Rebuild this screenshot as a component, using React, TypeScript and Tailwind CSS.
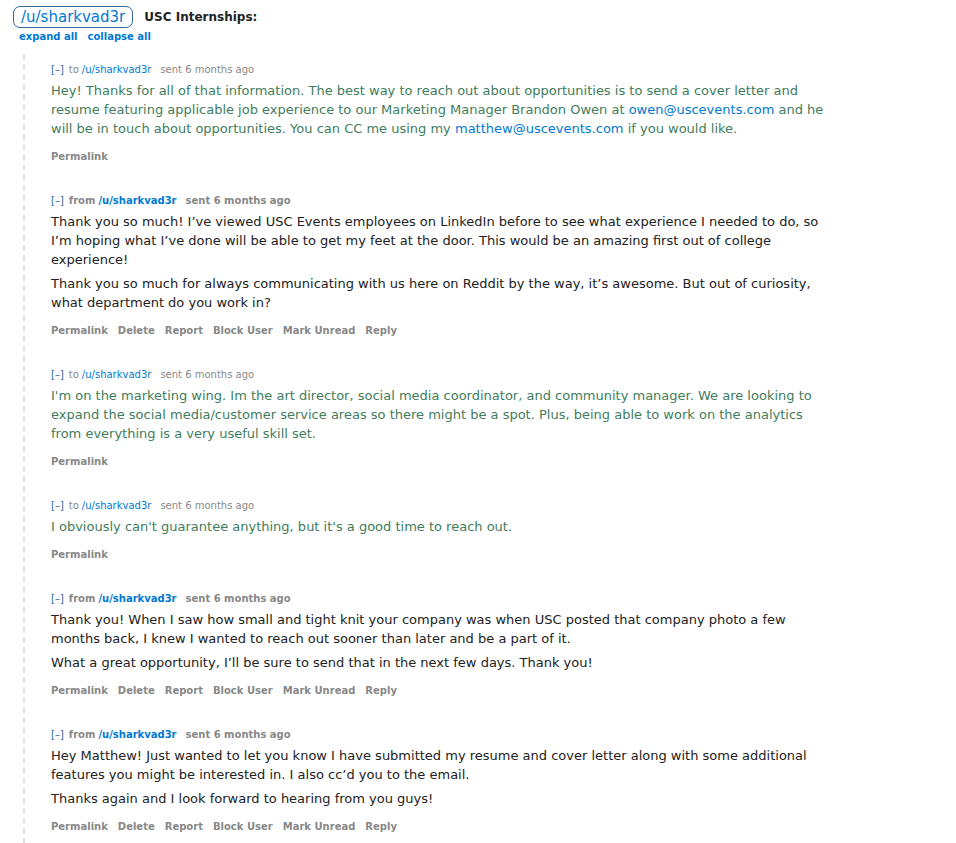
type Message = {
  dir: "to" | "from";
  paragraphs: React.ReactNode[];
};

const LINK = "text-[#0079d3]";

const MESSAGES: Message[] = [
  {
    dir: "to",
    paragraphs: [
      <>
        Hey! Thanks for all of that information. The best way to reach out about opportunities is to send a cover letter and
        resume featuring applicable job experience to our Marketing Manager Brandon Owen at{" "}
        <a className={LINK}>owen@uscevents.com</a> and he will be in touch about opportunities. You can CC me using my{" "}
        <a className={LINK}>matthew@uscevents.com</a> if you would like.
      </>,
    ],
  },
  {
    dir: "from",
    paragraphs: [
      "Thank you so much! I’ve viewed USC Events employees on LinkedIn before to see what experience I needed to do, so I’m hoping what I’ve done will be able to get my feet at the door. This would be an amazing first out of college experience!",
      "Thank you so much for always communicating with us here on Reddit by the way, it’s awesome. But out of curiosity, what department do you work in?",
    ],
  },
  {
    dir: "to",
    paragraphs: [
      "I'm on the marketing wing. Im the art director, social media coordinator, and community manager. We are looking to expand the social media/customer service areas so there might be a spot. Plus, being able to work on the analytics from everything is a very useful skill set.",
    ],
  },
  {
    dir: "to",
    paragraphs: ["I obviously can't guarantee anything, but it's a good time to reach out."],
  },
  {
    dir: "from",
    paragraphs: [
      "Thank you! When I saw how small and tight knit your company was when USC posted that company photo a few months back, I knew I wanted to reach out sooner than later and be a part of it.",
      "What a great opportunity, I’ll be sure to send that in the next few days. Thank you!",
    ],
  },
  {
    dir: "from",
    paragraphs: [
      "Hey Matthew! Just wanted to let you know I have submitted my resume and cover letter along with some additional features you might be interested in. I also cc’d you to the email.",
      "Thanks again and I look forward to hearing from you guys!",
    ],
  },
];

const RECEIVED_ACTIONS = ["Permalink", "Delete", "Report", "Block User", "Mark Unread", "Reply"];

function MessageRow({ msg }: { msg: Message }) {
  const sent = msg.dir === "to";
  const actions = sent ? ["Permalink"] : RECEIVED_ACTIONS;

  return (
    <div className="pb-[30px]">
      <p className={`flex h-[14px] items-center text-[10px] leading-[14px] text-[#888] ${sent ? "" : "font-bold"}`}>
        <span className="font-normal text-[#369]">[–]</span>
        <span className="ml-[5px]">{msg.dir}</span>
        <a className={`ml-[3px] ${LINK}`}>/u/sharkvad3r</a>
        <span className="ml-[9px]">sent 6 months ago</span>
      </p>
      <div className={`mt-[4px] flex max-w-[778px] flex-col gap-[5px] text-[13px] leading-[19px] ${sent ? "text-[#3f7d5c]" : "text-[#222]"}`}>
        {msg.paragraphs.map((p, i) => (
          <p key={i}>{p}</p>
        ))}
      </div>
      <ul className="mt-[12px] flex h-[14px] items-center gap-[10px] text-[10px] font-bold leading-[14px] text-[#888]">
        {actions.map((a) => (
          <li key={a}>{a}</li>
        ))}
      </ul>
    </div>
  );
}

export default function App() {
  return (
    <main className="min-h-screen bg-white pl-[13px] pt-[6px] font-['DejaVu_Sans',Verdana,sans-serif]">
      <div className="flex items-center gap-[11px]">
        <span className="flex h-[22px] items-center rounded-[7px] border border-[#369] px-[7px] text-[15px] text-[#0079d3]">
          /u/sharkvad3r
        </span>
        <h1 className="text-[12px] font-bold text-[#222]">USC Internships:</h1>
      </div>
      <div className="ml-[6px] mt-[2px] flex gap-[10px] text-[10px] font-bold leading-[14px] text-[#0079d3]">
        <a>expand all</a>
        <a>collapse all</a>
      </div>

      <div className="ml-[10px] mt-[10px] border-l-2 border-dashed border-[#e0e0e0] pl-[26px] pt-[9px]">
        {MESSAGES.map((m, i) => (
          <MessageRow key={i} msg={m} />
        ))}
      </div>
    </main>
  );
}
